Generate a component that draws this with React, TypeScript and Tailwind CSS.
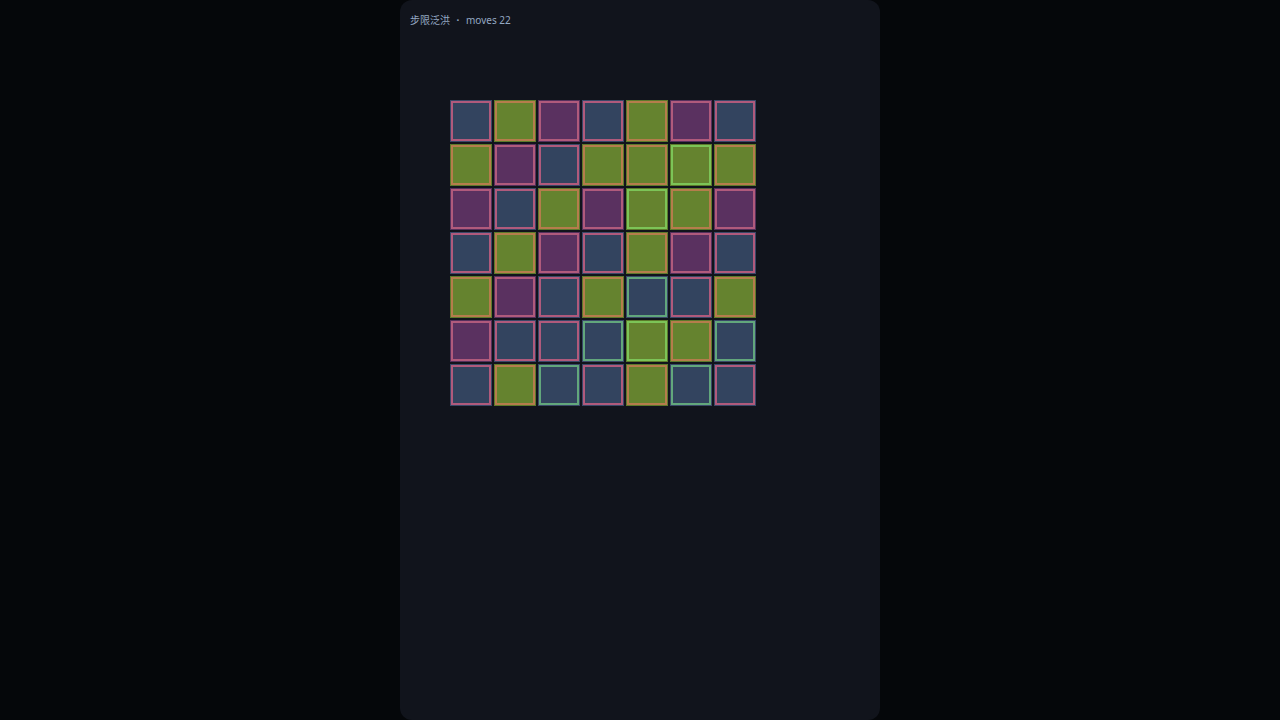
import React from "react";

type Tile = "s" | "g" | "p";
type Ring = "pink" | "orange" | "lime" | "teal";

const FILL: Record<Tile, string> = {
  s: "bg-[#33445f]",
  g: "bg-[#65832f]",
  p: "bg-[#5a3160]",
};

const RING: Record<Ring, string> = {
  pink: "border-[#b05a7c]",
  orange: "border-[#b57d4c]",
  lime: "border-[#7cc457]",
  teal: "border-[#62a77c]",
};

const EDGE: Record<Tile, string> = {
  s: "border-[#3a4868]",
  g: "border-[#5c7a2b]",
  p: "border-[#55305c]",
};

// tile colour + ring colour, row by row
const board: [Tile, Ring][][] = [
  [["s", "pink"], ["g", "orange"], ["p", "pink"], ["s", "pink"], ["g", "orange"], ["p", "pink"], ["s", "pink"]],
  [["g", "orange"], ["p", "pink"], ["s", "pink"], ["g", "orange"], ["g", "orange"], ["g", "lime"], ["g", "orange"]],
  [["p", "pink"], ["s", "pink"], ["g", "orange"], ["p", "pink"], ["g", "lime"], ["g", "orange"], ["p", "pink"]],
  [["s", "pink"], ["g", "orange"], ["p", "pink"], ["s", "pink"], ["g", "orange"], ["p", "pink"], ["s", "pink"]],
  [["g", "orange"], ["p", "pink"], ["s", "pink"], ["g", "orange"], ["s", "teal"], ["s", "pink"], ["g", "orange"]],
  [["p", "pink"], ["s", "pink"], ["s", "pink"], ["s", "teal"], ["g", "lime"], ["g", "orange"], ["s", "teal"]],
  [["s", "pink"], ["g", "orange"], ["s", "teal"], ["s", "pink"], ["g", "orange"], ["s", "teal"], ["s", "pink"]],
];

const Cell: React.FC<{ tile: Tile; ring: Ring }> = ({ tile, ring }) => (
  <div className={`w-[42px] h-[42px] border ${EDGE[tile]} ${FILL[tile]}`}>
    <div className={`w-full h-full border-2 ${RING[ring]}`} />
  </div>
);

export default function App() {
  return (
    <div
      className="min-h-screen bg-[#05070a] flex justify-center"
      style={{ fontFamily: '"Noto Sans", "Noto Sans CJK SC", sans-serif' }}
    >
      <div className="w-[480px] h-[720px] bg-[#11141c] rounded-[12px] pt-3 px-[10px]">
        <div className="text-[10px] leading-4 text-[#94a8c3] h-4">
          步限泛洪 <span className="font-bold mx-1">·</span> moves 22
        </div>
        <div className="mt-[72px] ml-[40px] grid grid-cols-[repeat(7,42px)] gap-[2px]">
          {board.flatMap((row, r) =>
            row.map(([tile, ring], c) => (
              <Cell key={`${r}-${c}`} tile={tile} ring={ring} />
            ))
          )}
        </div>
      </div>
    </div>
  );
}
